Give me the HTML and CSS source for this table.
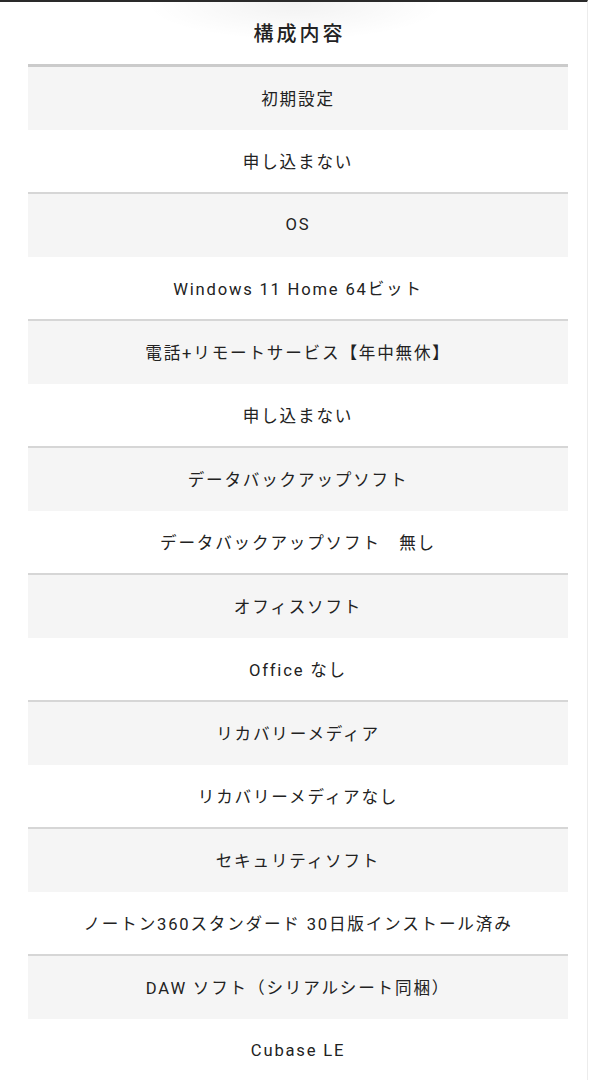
FILE: index.html
```html
<!DOCTYPE html>
<html lang="ja">
<head>
<meta charset="utf-8">
<title>構成内容</title>
<link rel="stylesheet" href="styles.css">
</head>
<body>
<div class="page">
  <section class="spec">
    <h2 class="spec-title">構成内容</h2>
    <dl class="spec-list">
      <div class="spec-item"><dt>初期設定</dt><dd>申し込まない</dd></div>
      <div class="spec-item"><dt>OS</dt><dd>Windows 11 Home 64ビット</dd></div>
      <div class="spec-item"><dt>電話+リモートサービス【年中無休】</dt><dd>申し込まない</dd></div>
      <div class="spec-item"><dt>データバックアップソフト</dt><dd>データバックアップソフト　無し</dd></div>
      <div class="spec-item"><dt>オフィスソフト</dt><dd>Office なし</dd></div>
      <div class="spec-item"><dt>リカバリーメディア</dt><dd>リカバリーメディアなし</dd></div>
      <div class="spec-item"><dt>セキュリティソフト</dt><dd>ノートン360スタンダード 30日版インストール済み</dd></div>
      <div class="spec-item"><dt>DAW ソフト（シリアルシート同梱）</dt><dd>Cubase LE</dd></div>
    </dl>
  </section>
</div>
</body>
</html>
```
FILE: styles.css
```css
html, body {
  margin: 0;
  padding: 0;
  background: #fff;
}
body {
  font-family: Roboto, "Noto Sans CJK JP", sans-serif;
  color: #222;
  height: 1080px;
  overflow: hidden;
}
.page {
  border-top: 2px solid #2a2a2a;
  border-right: 1px solid #ececec;
  margin-right: 4px;
  min-height: 1078px;
  background: radial-gradient(ellipse 150px 36px at 295px 2px, rgba(0,0,0,0.05), rgba(0,0,0,0) 100%);
}
.spec {
  margin: 0 19px 0 28px;
}
.spec-title {
  margin: 0;
  height: 62px;
  display: flex;
  align-items: center;
  justify-content: center;
  font-family: "Noto Sans CJK JP", sans-serif;
  font-size: 20px;
  font-weight: 500;
  letter-spacing: 3px;
  padding-left: 3px;
  padding-bottom: 2px;
  box-sizing: border-box;
}
.spec-list {
  margin: 0;
  border-top: 3px solid #cbcbcb;
}
.spec-item {
  border-bottom: 2px solid #d6d6d6;
}
.spec-item dt,
.spec-item dd {
  margin: 0;
  display: flex;
  align-items: center;
  justify-content: center;
  font-size: 16.6px;
  letter-spacing: 1.8px;
  text-align: center;
}
.spec-item dt {
  height: 63px;
  padding-bottom: 2px;
  box-sizing: border-box;
  background: #f5f5f5;
}
.spec-item dd {
  height: 62px;
}
```
